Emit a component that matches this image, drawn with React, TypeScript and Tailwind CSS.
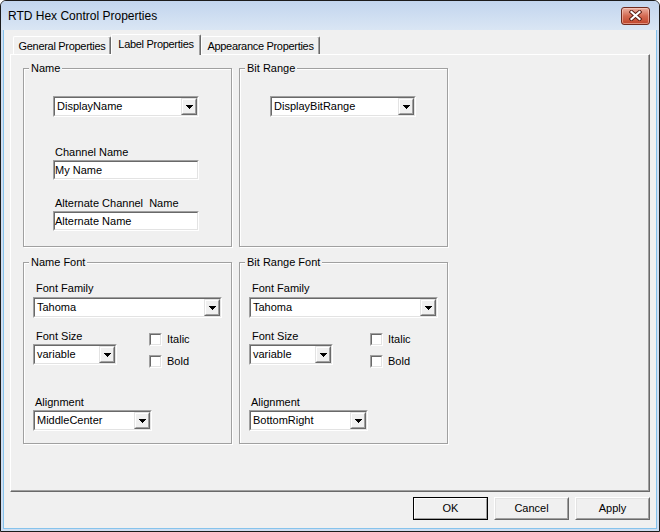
import React from "react"

// classic 3D edges
const sunkenOuter = "border border-t-[#a0a0a0] border-l-[#a0a0a0] border-r-white border-b-white"
const sunkenInner = "border border-t-[#696969] border-l-[#696969] border-r-[#e3e3e3] border-b-[#e3e3e3]"
const raisedOuter = "border border-t-[#e3e3e3] border-l-[#e3e3e3] border-r-[#696969] border-b-[#696969]"
const raisedInner = "border border-t-white border-l-white border-r-[#a0a0a0] border-b-[#a0a0a0] bg-[#f0f0f0]"

const Arrow = () => (
  <svg width="7" height="4" viewBox="0 0 7 4" shapeRendering="crispEdges">
    <path d="M0 0h7v1h-1v1h-1v1h-1v1h-1v-1h-1v-1h-1v-1h-1z" fill="#000" />
  </svg>
)

function Combo({ value, className }: { value: string; className: string }) {
  return (
    <div className={`h-[21px] ${sunkenOuter} ${className}`}>
      <div className={`h-full flex bg-white ${sunkenInner}`}>
        <span className="flex-1 pl-[2px] leading-[17px] whitespace-nowrap overflow-hidden">{value}</span>
        <div className={`w-[16px] h-full ${raisedOuter}`}>
          <div className={`h-full flex items-center justify-center ${raisedInner}`}>
            <Arrow />
          </div>
        </div>
      </div>
    </div>
  )
}

function TextBox({ value, className }: { value: string; className: string }) {
  return (
    <div className={`h-[20px] ${sunkenOuter} ${className}`}>
      <div className={`h-full bg-white leading-[16px] ${sunkenInner}`}>{value}</div>
    </div>
  )
}

function Check({ label }: { label: string }) {
  return (
    <div className="flex items-center h-[13px]">
      <div className={`w-[13px] h-[13px] ${sunkenOuter}`}>
        <div className={`h-full bg-white ${sunkenInner}`} />
      </div>
      <span className="ml-[5px] leading-[13px]">{label}</span>
    </div>
  )
}

function Group({ title, className, children }: { title: string; className: string; children?: React.ReactNode }) {
  return (
    <div className={`relative border border-[#a0a0a0] shadow-[inset_1px_1px_0_#fff,1px_1px_0_#fff] ${className}`}>
      <span className="absolute left-[5px] -top-[7px] px-[2px] bg-[#f0f0f0] leading-[13px]">{title}</span>
      {children}
    </div>
  )
}

function FontGroup({ title, align, checkGap }: { title: string; align: string; checkGap: string }) {
  return (
    <Group title={title} className="h-[182px] pl-[9px] pt-[19px]">
      <div className="ml-[3px] leading-[13px]">Font Family</div>
      <Combo value="Tahoma" className="w-[189px] mt-[2px]" />
      <div className="flex mt-[12px]">
        <div className="w-[84px]">
          <div className="ml-[3px] leading-[13px]">Font Size</div>
          <Combo value="variable" className="w-[84px] mt-[1px]" />
        </div>
        <div className={`${checkGap} pt-[3px] flex flex-col gap-[9px]`}>
          <Check label="Italic" />
          <Check label="Bold" />
        </div>
      </div>
      <div className="ml-[2px] mt-[28px] leading-[13px]">Alignment</div>
      <Combo value={align} className="w-[119px] mt-[1px]" />
    </Group>
  )
}

function Tab({ label, active, className }: { label: string; active?: boolean; className: string }) {
  if (active) {
    return (
      <div className={`h-[21px] pt-[3px] text-center leading-[13px] tracking-[-0.3px] whitespace-nowrap bg-[#f0f0f0] border-t border-l border-t-white border-l-white border-r border-r-[#696969] shadow-[inset_-1px_0_0_#a0a0a0] rounded-t-[2px] ${className}`}>
        {label}
      </div>
    )
  }
  return (
    <div className={`h-[18px] mt-[2px] pt-[3px] text-center leading-[13px] tracking-[-0.3px] whitespace-nowrap border-t border-l border-t-white border-l-white border-r border-r-[#696969] shadow-[inset_-1px_0_0_#a0a0a0] rounded-t-[2px] ${className}`}>
      {label}
    </div>
  )
}

function PushButton({ label, isDefault }: { label: string; isDefault?: boolean }) {
  if (isDefault) {
    return (
      <div className="w-[75px] h-[23px] border border-black">
        <div className="h-full border border-t-white border-l-white border-r-[#a0a0a0] border-b-[#a0a0a0] bg-[#f0f0f0] flex items-center justify-center">
          {label}
        </div>
      </div>
    )
  }
  return (
    <div className="w-[75px] h-[23px] border border-t-white border-l-white border-r-[#696969] border-b-[#696969]">
      <div className="h-full border border-t-[#e3e3e3] border-l-[#e3e3e3] border-r-[#a0a0a0] border-b-[#a0a0a0] bg-[#f0f0f0] flex items-center justify-center">
        {label}
      </div>
    </div>
  )
}

function CloseButton() {
  return (
    <div className="w-[29px] h-[18px] rounded-[3px] border border-[#6f2a1e] bg-linear-to-b from-[#eab0a2] via-[#d36a52] to-[#c0442a] shadow-[inset_0_0_0_1px_rgba(255,220,210,0.5)] flex items-center justify-center">
      <svg width="13" height="11" viewBox="0 0 13 11">
        <path d="M2.5 2L10.5 9M10.5 2L2.5 9" stroke="#5b1d12" strokeWidth="4" strokeLinecap="square" />
        <path d="M2.5 2L10.5 9M10.5 2L2.5 9" stroke="#fff" strokeWidth="2.2" strokeLinecap="square" />
      </svg>
    </div>
  )
}

export default function App() {
  return (
    <div className="w-[660px] h-[532px] flex flex-col border border-[#1b1b1b] rounded-t-[6px] overflow-hidden bg-[#cfdef1] text-black text-[11px] font-['Liberation_Sans',Arial,sans-serif]">
      <div className="h-[29px] shrink-0 flex items-center justify-between pl-[7px] pr-[9px] bg-linear-to-b from-[#c2d5ee] to-[#dae6f4]">
        <span className="text-[12px]">RTD Hex Control Properties</span>
        <CloseButton />
      </div>
      <div className="flex-1 px-[2px] pb-[2px]">
        <div className="h-full flex flex-col border border-t-0 border-[#86c3ec] bg-[#f0f0f0] px-[6px] pt-[4px]">
          <div className="h-[20px] flex items-start pl-[3px] relative z-10">
            <Tab label="General Properties" className="w-[98px]" />
            <Tab label="Label Properties" active className="w-[90px]" />
            <Tab label="Appearance Properties" className="w-[119px]" />
          </div>
          <div className="h-[438px] border border-t-white border-l-white border-r-[#696969] border-b-[#696969]">
            <div className="h-full border-r border-b border-[#a0a0a0] pl-[12px] pt-[13px]">
              <div className="grid grid-cols-[209px_209px] gap-x-[7px] gap-y-[15px]">
                <Group title="Name" className="h-[179px] pl-[29px] pt-[27px]">
                  <Combo value="DisplayName" className="w-[146px]" />
                  <div className="ml-[2px] mt-[29px] leading-[13px]">Channel Name</div>
                  <TextBox value="My Name" className="w-[146px] mt-[1px]" />
                  <div className="ml-[2px] mt-[17px] leading-[13px] whitespace-pre">Alternate Channel  Name</div>
                  <TextBox value="Alternate Name" className="w-[146px] mt-[1px]" />
                </Group>
                <Group title="Bit Range" className="h-[179px] pl-[30px] pt-[27px]">
                  <Combo value="DisplayBitRange" className="w-[146px]" />
                </Group>
                <FontGroup title="Name Font" align="MiddleCenter" checkGap="ml-[32px]" />
                <FontGroup title="Bit Range Font" align="BottomRight" checkGap="ml-[37px]" />
              </div>
            </div>
          </div>
          <div className="flex justify-end gap-[6px] mt-[5px]">
            <PushButton label="OK" isDefault />
            <PushButton label="Cancel" />
            <PushButton label="Apply" />
          </div>
        </div>
      </div>
    </div>
  )
}
